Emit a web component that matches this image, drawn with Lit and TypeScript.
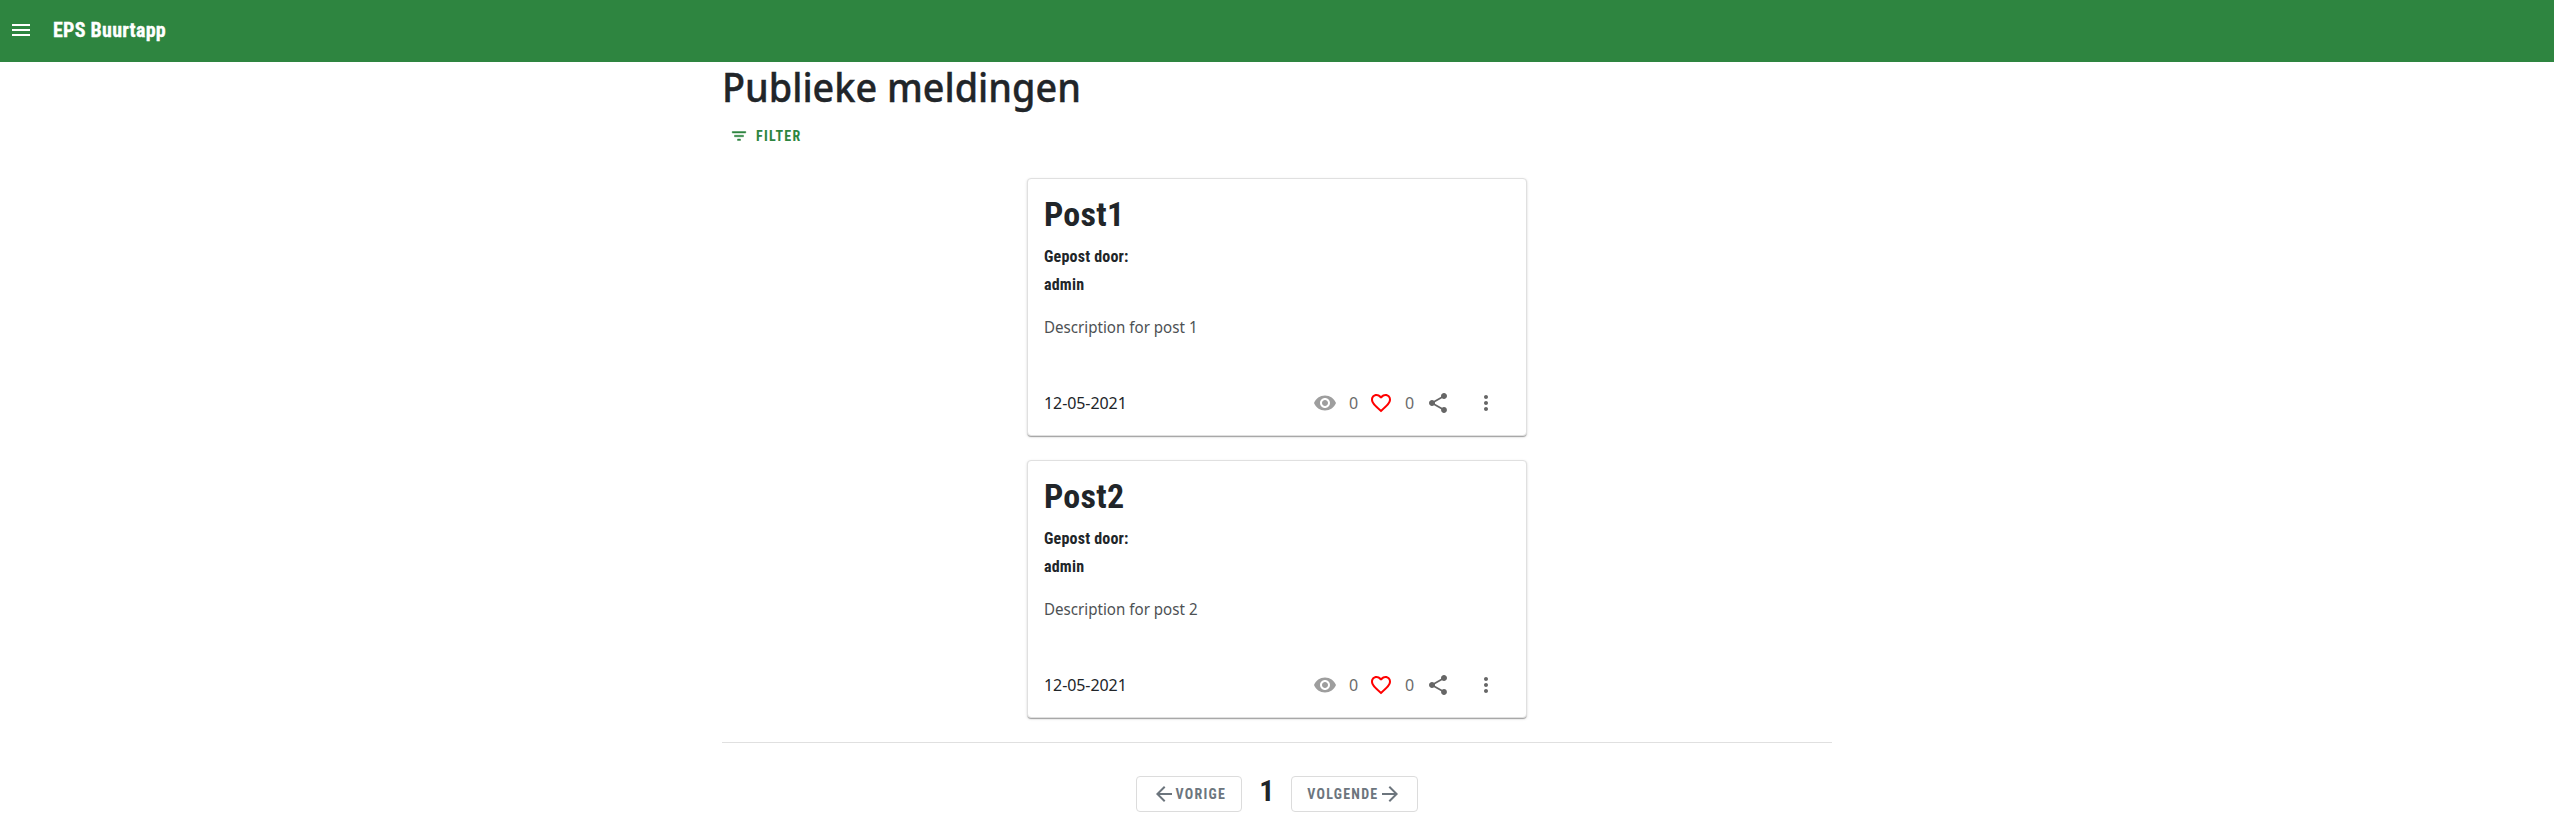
import { LitElement, html, css, svg } from "lit";
import { customElement, property } from "lit/decorators.js";

const icon = (d: string, cls = "") =>
  html`<svg class="icon ${cls}" viewBox="0 0 24 24">${svg`<path d=${d}></path>`}</svg>`;

const MENU = "M3 18h18v-2H3v2zm0-5h18v-2H3v2zm0-7v2h18V6H3z";
const FILTER = "M10 18h4v-2h-4v2zM3 6v2h18V6H3zm3 7h12v-2H6v2z";
const EYE = "M12 4.5C7 4.5 2.73 7.61 1 12c1.73 4.39 6 7.5 11 7.5s9.27-3.11 11-7.5c-1.73-4.39-6-7.5-11-7.5zM12 17c-2.76 0-5-2.24-5-5s2.24-5 5-5 5 2.24 5 5-2.24 5-5 5zm0-8c-1.66 0-3 1.34-3 3s1.34 3 3 3 3-1.34 3-3-1.34-3-3-3z";
const HEART = "M16.5 3c-1.74 0-3.41.81-4.5 2.09C10.91 3.81 9.24 3 7.5 3 4.42 3 2 5.42 2 8.5c0 3.78 3.4 6.86 8.55 11.54L12 21.35l1.45-1.32C18.6 15.36 22 12.28 22 8.5 22 5.42 19.58 3 16.5 3zm-4.4 15.55l-.1.1-.1-.1C7.14 14.24 4 11.39 4 8.5 4 6.5 5.5 5 7.5 5c1.54 0 3.04.99 3.57 2.36h1.87C13.46 5.99 14.96 5 16.5 5c2 0 3.5 1.5 3.5 3.5 0 2.89-3.14 5.74-7.9 10.05z";
const SHARE = "M18 16.08c-.76 0-1.44.3-1.96.77L8.91 12.7c.05-.23.09-.46.09-.7s-.04-.47-.09-.7l7.05-4.11c.54.5 1.25.81 2.04.81 1.66 0 3-1.34 3-3s-1.34-3-3-3-3 1.34-3 3c0 .24.04.47.09.7L8.04 9.81C7.5 9.31 6.79 9 6 9c-1.66 0-3 1.34-3 3s1.34 3 3 3c.79 0 1.5-.31 2.04-.81l7.12 4.16c-.05.21-.08.43-.08.65 0 1.61 1.31 2.92 2.92 2.92s2.92-1.31 2.92-2.92-1.31-2.92-2.92-2.92z";
const MORE = "M12 8c1.1 0 2-.9 2-2s-.9-2-2-2-2 .9-2 2 .9 2 2 2zm0 2c-1.1 0-2 .9-2 2s.9 2 2 2 2-.9 2-2-.9-2-2-2zm0 6c-1.1 0-2 .9-2 2s.9 2 2 2 2-.9 2-2-.9-2-2-2z";
const BACK = "M20 11H7.83l5.59-5.59L12 4l-8 8 8 8 1.41-1.41L7.83 13H20v-2z";
const FORWARD = "M12 4l-1.41 1.41L16.17 11H4v2h12.17l-5.58 5.59L12 20l8-8z";

const shared = css`
  .icon { width: 24px; height: 24px; display: block; fill: currentColor; flex: none; }
  .cond { font-family: "Roboto Condensed", Roboto, sans-serif; font-stretch: 75%; font-weight: 700; white-space: nowrap; }
  .ui { font-family: "Noto Sans", "Open Sans", sans-serif; white-space: nowrap; }
`;

@customElement("post-card")
export class PostCard extends LitElement {
  @property() heading = "";
  @property() author = "";
  @property() description = "";
  @property() date = "";
  static styles = [shared, css`
    :host { display: block; width: 500px; height: 258px; box-sizing: border-box; }
    .card { height: 100%; box-sizing: border-box; padding: 0 16px; border: 1px solid #e0e0e0; border-radius: 4px; background: #fff;
      box-shadow: 0 2px 1px -1px rgba(0,0,0,.2), 0 1px 1px 0 rgba(0,0,0,.14), 0 1px 3px 0 rgba(0,0,0,.12); color: #212529; }
    .title { font-size: 34px; line-height: 40px; margin: 0; padding-top: 15px; letter-spacing: .25px; }
    .meta { font-size: 16px; line-height: 28px; margin: 0; letter-spacing: .2px; }
    .first { padding-top: 9px; }
    .desc { font-size: 16px; line-height: 24px; margin: 16px 0 0; color: #4d5154; }
    .desc span { display: inline-block; transform: scaleX(.945); transform-origin: left; }
    .foot { display: flex; align-items: center; height: 24px; margin-top: 52px; font-size: 16px; }
    .date { flex: 1; letter-spacing: -.08px; }
    .num { color: #6b6b6b; width: 10px; }
    .eye { color: #9e9e9e; margin-right: 12px; }
    .heart { color: #f00; margin: 0 12px 0 10px; }
    .share { color: #666; margin: 0 24px 0 11px; }
    .more { color: #666; margin-right: 12px; }
  `];
  render() {
    return html`<article class="card">
      <h2 class="title cond">${this.heading}</h2>
      <p class="meta first cond">Gepost door:</p>
      <p class="meta cond">${this.author}</p>
      <p class="desc ui"><span>${this.description}</span></p>
      <div class="foot ui"><span class="date">${this.date}</span>
        ${icon(EYE, "eye")}<span class="num">0</span>${icon(HEART, "heart")}<span class="num">0</span>${icon(SHARE, "share")}${icon(MORE, "more")}
      </div>
    </article>`;
  }
}

@customElement("app-root")
export class AppRoot extends LitElement {
  static styles = [shared, css`
    :host { display: block; height: 818px; overflow: hidden; background: #fff; color: #212529; }
    .bar { height: 62px; background: #2e8540; color: #fff; display: flex; align-items: center; gap: 20px; padding: 0 0 2px 9px; box-sizing: border-box; }
    .brand { font-size: 20px; line-height: 24px; letter-spacing: .25px; -webkit-text-stroke: .3px currentColor; }
    .page { width: 1110px; margin: 0 auto; }
    .heading { font-size: 40px; font-weight: 500; line-height: 48px; margin: 0; padding-top: 1px; -webkit-text-stroke: .4px currentColor; }
    .heading span { display: inline-block; transform: scaleX(.945); transform-origin: left; }
    .filter { display: flex; align-items: center; height: 36px; margin-top: 7px; padding-left: 8px; color: #2e8540; border: 0; background: none; font-size: 14px; letter-spacing: 1.25px; }
    .filter .icon { width: 18px; height: 18px; margin-right: 8px; stroke: currentColor; stroke-width: .6px; }
    .list { display: flex; flex-direction: column; align-items: center; gap: 24px; padding-top: 24px; }
    .pager { margin-top: 24px; border-top: 1px solid #e0e0e0; padding-top: 33px; display: flex; justify-content: center; }
    .btn { height: 36px; box-sizing: border-box; border: 1px solid #dcdcdc; border-radius: 4px; background: #fff; color: #6c757d; display: flex; align-items: center; font-size: 14px; letter-spacing: 1.25px; padding: 0 15px; }
    .num { font-size: 30px; line-height: 30px; margin: 0 17px; }
  `];
  render() {
    return html`
      <header class="bar">${icon(MENU)}<span class="brand cond">EPS Buurtapp</span></header>
      <main class="page">
        <h1 class="heading ui"><span>Publieke meldingen</span></h1>
        <button class="filter cond">${icon(FILTER)}<span>FILTER</span></button>
        <section class="list">
          ${[1, 2].map((n) => html`<post-card heading="Post${n}" author="admin" description="Description for post ${n}" date="12-05-2021"></post-card>`)}
        </section>
        <nav class="pager">
          <button class="btn cond">${icon(BACK)}<span>VORIGE</span></button>
          <span class="num cond">1</span>
          <button class="btn cond"><span>VOLGENDE</span>${icon(FORWARD)}</button>
        </nav>
      </main>`;
  }
}
